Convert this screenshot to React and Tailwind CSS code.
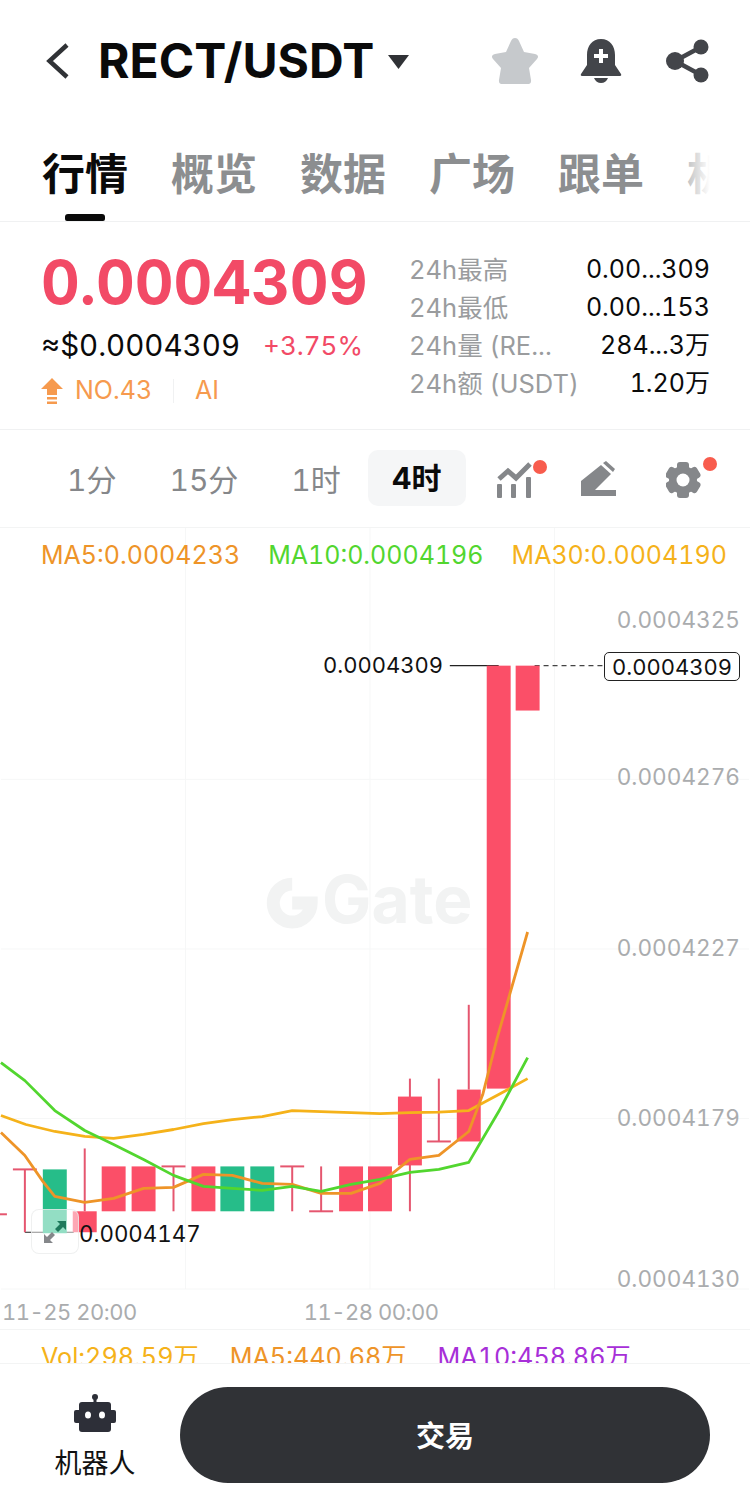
const sans = "font-['Inter','Noto_Sans_CJK_SC',sans-serif]";

const tabs = ["行情", "概览", "数据", "广场", "跟单", "机"];

const stats = [
  { label: "24h最高", value: "0.00...309" },
  { label: "24h最低", value: "0.00...153" },
  { label: "24h量 (RE...", value: "284...3万" },
  { label: "24h额 (USDT)", value: "1.20万" },
];

// candles in page coordinates: x center, body top, body bottom, wick top, wick bottom
const candles = [
  { x: 54, top: 1170, bottom: 1234, color: "#26bd89" },
  { x: 84, top: 1212, bottom: 1233, wickTop: 1149, wickBottom: 1212 },
  { x: 113, top: 1167, bottom: 1212 },
  { x: 143, top: 1167, bottom: 1212 },
  { x: 203, top: 1167, bottom: 1212 },
  { x: 232, top: 1167, bottom: 1212, color: "#26bd89" },
  { x: 262, top: 1167, bottom: 1212, color: "#26bd89" },
  { x: 351, top: 1167, bottom: 1212 },
  { x: 380, top: 1167, bottom: 1212 },
  { x: 410, top: 1097, bottom: 1166, wickTop: 1079, wickBottom: 1212 },
  { x: 469, top: 1090, bottom: 1142, wickTop: 1005, wickBottom: 1090 },
  { x: 499, top: 665, bottom: 1089 },
  { x: 528, top: 665, bottom: 710 },
];

// flat candles: x center, bar y, stem y1, stem y2
const dojis = [
  { x: 24, bar: 1170, y1: 1170, y2: 1233 },
  { x: -6, bar: 1215, y1: 1170, y2: 1215 },
  { x: 173, bar: 1167, y1: 1167, y2: 1212 },
  { x: 292, bar: 1167, y1: 1167, y2: 1212 },
  { x: 321, bar: 1212, y1: 1167, y2: 1212 },
  { x: 439, bar: 1142, y1: 1079, y2: 1142 },
];

const ma30 = "0,1116 25,1125 54,1132 84,1137 113,1139 143,1135 173,1130 203,1124 232,1120 262,1117 292,1111 321,1112 351,1113 380,1114 410,1113 439,1112.5 469,1111 499,1095 528,1079";
const ma5 = "0,1133 24,1156 42,1182 54,1197 84,1203 113,1199 143,1189 173,1188 203,1175 232,1176 262,1184 292,1185 321,1194 351,1194 380,1184 410,1160 439,1156 469,1132 483,1095 497,1040 528,932";
const ma10 = "0,1063 24,1081 54,1111 84,1131 113,1145 143,1160 173,1176 203,1187 232,1189 262,1191 292,1187 321,1192 351,1185 380,1180 410,1173 439,1170 469,1163 499,1112 528,1058";

const axis = [
  { label: "0.0004325", top: 77 },
  { label: "0.0004276", top: 234 },
  { label: "0.0004227", top: 405 },
  { label: "0.0004179", top: 575 },
  { label: "0.0004130", top: 736 },
];

const Chart = () => (
  <svg className="absolute inset-0 w-full h-full" viewBox="0 527 750 803">
    {/* grid */}
    {[185, 370, 555].map((x) => (
      <line key={x} x1={x} x2={x} y1="527" y2="1290" stroke="#f6f7f7" strokeWidth="1" />
    ))}
    {[779, 949, 1119, 1290].map((y) => (
      <line key={y} x1="0" x2="750" y1={y} y2={y} stroke="#f6f7f7" strokeWidth="1" />
    ))}

    {/* watermark */}
    <path d="M292 884a19 19 0 1 0 19 19h-19" fill="none" stroke="#f2f3f3" strokeWidth="13" />
    <text x="322" y="923" fontFamily="Inter, sans-serif" fontWeight="700" fontSize="66" fill="#f2f3f3">Gate</text>

    {/* high / low guides */}
    <line x1="450" x2="499" y1="665" y2="665" stroke="#222" strokeWidth="1.2" />
    <line x1="535" x2="603" y1="665" y2="665" stroke="#444" strokeWidth="1.2" strokeDasharray="5 4" />
    <line x1="24" x2="73" y1="1233" y2="1233" stroke="#222" strokeWidth="1.2" />

    {/* candles */}
    {dojis.map((d) => (
      <g key={d.x} stroke="#e5566f" strokeWidth="2">
        <line x1={d.x} x2={d.x} y1={d.y1} y2={d.y2} />
        <line x1={d.x - 12} x2={d.x + 12} y1={d.bar} y2={d.bar} />
      </g>
    ))}
    {candles.map((c) => (
      <g key={c.x}>
        {c.wickTop && <line x1={c.x} x2={c.x} y1={c.wickTop} y2={c.wickBottom} stroke="#e5566f" strokeWidth="2" />}
        <rect x={c.x - 12} y={c.top} width="24" height={c.bottom - c.top} fill={c.color || "#fb4f68"} />
      </g>
    ))}

    {/* moving averages */}
    <polyline points={ma30} fill="none" stroke="#f5b21a" strokeWidth="2.8" strokeLinejoin="round" />
    <polyline points={ma5} fill="none" stroke="#ee9428" strokeWidth="2.8" strokeLinejoin="round" />
    <polyline points={ma10} fill="none" stroke="#52d62f" strokeWidth="2.8" strokeLinejoin="round" />
  </svg>
);

const App = () => {
  return (
    <div className={`relative w-[750px] h-[1507px] overflow-hidden bg-white tabular-nums ${sans}`}>
      {/* Header */}
      <div className="h-[122px] flex items-center pl-[46px] pr-[40px]">
        <svg width="24" height="36" viewBox="0 0 24 36">
          <path d="M21 2 3.500 18 21 34" fill="none" stroke="#303236" strokeWidth="4.5" />
        </svg>
        <h1 className="ml-[28px] text-[48px] leading-none font-bold text-[#0a0a0a]">RECT/USDT</h1>
        <svg className="ml-[14px] mt-[2px]" width="21" height="14" viewBox="0 0 21 14">
          <path d="M0 0h21L10.500 14z" fill="#303236" />
        </svg>
        <div className="ml-auto flex items-center">
          <svg width="48" height="48" viewBox="0 0 48 48">
            <path d="M24 1c2 0 3 1 4 3l5 11 11 2c3 .6 4 3 2 5l-8 9 2 12c.4 3-1 4-4 4H12c-3 0-4.400-1-4-4l2-12-8-9c-2-2-1-4.400 2-5l11-2 5-11c1-2 2-3 4-3z" fill="#c6c9cc" />
          </svg>
          <svg className="ml-[41px]" width="42" height="44" viewBox="0 0 42 44">
            <path d="M21 0c9 0 14 7 14 16v10l6 9c.6 1 0 2-1 2H2c-1 0-1.600-1-1-2l6-9V16C7 7 12 0 21 0z" fill="#43454a" />
            <path d="M14 39h14c-1 3-4 5-7 5s-6-2-7-5z" fill="#43454a" />
            <path d="M19 10h4v5h5v4h-5v5h-4v-5h-5v-4h5z" fill="#fff" />
          </svg>
          <svg className="ml-[44px]" width="44" height="44" viewBox="0 0 44 44">
            <path d="M35 8 9 22l26 14" fill="none" stroke="#43454a" strokeWidth="4.5" />
            <circle cx="35" cy="8" r="7.5" fill="#43454a" />
            <circle cx="9" cy="22" r="9" fill="#43454a" />
            <circle cx="35" cy="36" r="7.5" fill="#43454a" />
          </svg>
        </div>
      </div>

      {/* Tabs */}
      <div className="relative h-[100px] border-b border-[#f0f1f2] overflow-hidden">
        <div className="flex gap-[43px] pl-[42px] pt-[28px] text-[43px] leading-[48px] font-bold text-[#8c8e90] whitespace-nowrap">
          {tabs.map((tab, i) => (
            <span key={tab} className={i === 0 ? "text-[#0a0a0a]" : ""}>{tab}</span>
          ))}
        </div>
        <div className="absolute left-[65px] bottom-0 w-[40px] h-[7px] rounded-t-[3px] rounded-b-[2px] bg-[#0a0a0a]" />
        <div className="absolute top-0 bottom-0 left-[680px] w-[30px] bg-gradient-to-r from-white/30 to-white" />
        <div className="absolute top-0 bottom-0 left-[710px] right-0 bg-white" />
      </div>

      {/* Price stats */}
      <div className="h-[208px] border-b border-[#f0f1f2] flex pl-[41px] pr-[40px]">
        <div className="w-[330px]">
          <div className="mt-[25px] text-[60px] leading-[70px] font-bold text-[#f24a66]">0.0004309</div>
          <div className="mt-[11px] flex items-center justify-between h-[34px] pr-[8px]">
            <span className="text-[29.5px] text-[#0a0a0a]">≈$0.0004309</span>
            <span className="text-[26px] text-[#f24a66]">+3.75%</span>
          </div>
          <div className="mt-[14px] flex items-center h-[30px] text-[25px] text-[#f69a4e]">
            <svg width="22" height="26" viewBox="0 0 22 26">
              <path d="M11 0l11 11h-6v6H6v-6H0z" fill="#f69a4e" />
              <path d="M6 19h10v2.500H6zM6 23.500h10V26H6z" fill="#f69a4e" />
            </svg>
            <span className="ml-[12px]">NO.43</span>
            <span className="ml-[21px] w-px h-[24px] bg-[#f0f1f2]" />
            <span className="ml-[21px]">AI</span>
          </div>
        </div>
        <div className="ml-[38px] flex-1 pt-[29px] flex flex-col gap-[1px]">
          {stats.map((s) => (
            <div key={s.label} className="h-[37px] flex items-center justify-between leading-none whitespace-nowrap">
              <span className="text-[25.5px] text-[#9a9c9e]">{s.label}</span>
              <span className="text-[25px] text-[#0a0a0a]">{s.value}</span>
            </div>
          ))}
        </div>
      </div>

      {/* Timeframes */}
      <div className="h-[97px] flex items-center pl-[67px] text-[30px] text-[#85878a]">
        <span className="mt-[3px]">1分</span>
        <span className="ml-[53px] mt-[3px]">15分</span>
        <span className="ml-[53px] mt-[3px]">1时</span>
        <span className="ml-[27px] w-[98px] h-[56px] -mt-[1px] rounded-[10px] bg-[#f5f6f7] flex items-center justify-center font-bold text-[#0a0a0a]">4时</span>
        <svg className="ml-[31px]" width="50" height="38" viewBox="0 0 50 38">
          <path d="M2 19l9-8 8 7L33 4" fill="none" stroke="#85878a" strokeWidth="5" />
          <rect x="0" y="24" width="5" height="14" rx="1" fill="#85878a" />
          <rect x="14" y="24" width="5" height="14" rx="1" fill="#85878a" />
          <rect x="29" y="17" width="5" height="21" rx="1" fill="#85878a" />
          <circle cx="43" cy="7" r="7" fill="#f85c4d" />
        </svg>
        <svg className="ml-[34px]" width="36" height="36" viewBox="0 0 36 36">
          <path d="M20 4l10 9-16 16H0v-9z" fill="#85878a" />
          <path d="M22 2l3-2 9 8-2 3z" fill="#85878a" />
          <rect x="0" y="29" width="35" height="6" fill="#85878a" />
          <path d="M16 29h20V24H21z" fill="#fff" />
        </svg>
        <svg className="ml-[49px]" width="52" height="44" viewBox="0 0 52 44">
          <g fill="#85878a" transform="translate(17 23)">
            <circle r="14" />
            <rect x="-6" y="-18" width="12" height="36" rx="3" />
            <rect x="-6" y="-18" width="12" height="36" rx="3" transform="rotate(60)" />
            <rect x="-6" y="-18" width="12" height="36" rx="3" transform="rotate(120)" />
            <circle r="6.5" fill="#fff" />
          </g>
          <circle cx="44" cy="7" r="7" fill="#f85c4d" />
        </svg>
      </div>

      {/* Chart area */}
      <div className="relative h-[803px] border-t border-[#f3f4f4] border-b overflow-hidden flex flex-col justify-between">
        <Chart />
        <div className="relative flex gap-[28px] pl-[41px] pt-[12px] text-[25px] leading-[30px] whitespace-nowrap">
          <span className="text-[#ee9428]">MA5:0.0004233</span>
          <span className="text-[#52d62f]">MA10:0.0004196</span>
          <span className="text-[#f5b21a]">MA30:0.0004190</span>
        </div>

        {axis.map((a) => (
          <div key={a.label} className="absolute right-[10px] text-[22.6px] leading-[30px] text-[#aaacae]" style={{ top: a.top }}>{a.label}</div>
        ))}

        <div className="absolute left-[323px] top-[122px] text-[22px] leading-[30px] text-[#111]">0.0004309</div>
        <div className="absolute left-[604px] top-[124px] w-[136px] h-[29px] border border-[#222] rounded-[5px] bg-white flex items-center justify-center text-[22px] leading-none text-[#111]">0.0004309</div>
        <div className="absolute left-[79px] top-[691px] text-[22.3px] leading-[30px] text-[#111]">0.0004147</div>

        {/* fullscreen toggle */}
        <div className="absolute left-[31px] top-[681px] w-[48px] h-[45px] rounded-[8px] border border-[#e8e9ea]/70 bg-white/50 flex items-center justify-center">
          <svg width="26" height="26" viewBox="0 0 26 26">
            <path d="M15 2h9v9l-3-3-5 5-3-3 5-5z" fill="#1f7a5c" />
            <path d="M11 24H2v-9l3 3 5-5 3 3-5 5z" fill="#85878a" />
          </svg>
        </div>

        <div className="relative h-[41px] flex items-center gap-[167px] pl-[2px] pt-[7px] text-[22px] tracking-[-0.5px] text-[#aaacae] whitespace-nowrap">
          <span>11-25 20:00</span>
          <span>11-28 00:00</span>
        </div>
      </div>

      {/* Volume row, cut off by the bottom bar */}
      <div className="h-[33px] overflow-hidden flex gap-[31px] pl-[41px] pt-[12px] text-[25.2px] leading-[30px] whitespace-nowrap">
        <span className="text-[#f5b21a]">Vol:298.59万</span>
        <span className="text-[#ee9428]">MA5:440.68万</span>
        <span className="text-[#a72fd8]">MA10:458.86万</span>
      </div>

      {/* Bottom bar */}
      <div className="h-[144px] border-t border-[#f3f4f4] flex pl-[40px] pr-[40px] pt-[23px]">
        <div className="w-[110px] flex flex-col items-center pt-[7px]">
          <svg width="42" height="38" viewBox="0 0 42 38">
            <circle cx="21" cy="3" r="3" fill="#2d2f38" />
            <rect x="19.5" y="3" width="3" height="6" fill="#2d2f38" />
            <rect x="5" y="8" width="32" height="30" rx="3" fill="#2d2f38" />
            <rect x="0" y="16" width="42" height="13" rx="2" fill="#2d2f38" />
            <ellipse cx="14" cy="21" rx="3" ry="3.5" fill="#fff" />
            <ellipse cx="28" cy="21" rx="3" ry="3.5" fill="#fff" />
          </svg>
          <span className="mt-[17px] text-[27px] leading-[30px] text-[#111] whitespace-nowrap">机器人</span>
        </div>
        <button className="ml-[30px] flex-1 h-[96px] pt-[4px] rounded-full bg-[#303236] text-white text-[29px] font-bold">交易</button>
      </div>
    </div>
  );
};

export default App;
